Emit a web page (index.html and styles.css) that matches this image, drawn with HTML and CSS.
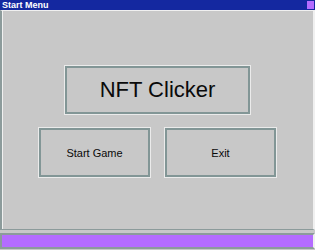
FILE: index.html
```html
<!DOCTYPE html>
<html lang="en">
<head>
    <meta charset="UTF-8">
    <meta name="viewport" content="width=device-width, initial-scale=1.0">
    <title>Start Menu</title>
    <link rel="stylesheet" href="styles.css">
</head>
<body>
    <div class="window">
        <div class="titleBar">
            <span class="titleText">Start Menu</span>
            <span class="titleButton"></span>
        </div>
        <div class="panel">
            <div class="logo">NFT Clicker</div>
            <div class="buttons">
                <button class="menuButton">Start Game</button>
                <button class="menuButton">Exit</button>
            </div>
        </div>
        <div class="statusBar">
            <div class="statusFill"></div>
        </div>
    </div>
</body>
</html>
```

FILE: styles.css
```css
body {
    margin: 0;
    background-color: rgb(200, 200, 200);
    font-family: "Liberation Sans", Arial, sans-serif;
}
.window {
    width: 315px;
    height: 250px;
    display: flex;
    flex-direction: column;
    background-color: rgb(200, 200, 200);
}
.titleBar {
    height: 10px;
    background-color: rgb(20, 40, 160);
    display: flex;
    align-items: center;
    justify-content: space-between;
    padding: 0 1px 0 2px;
}
.titleText {
    color: white;
    font-size: 9px;
    font-weight: bold;
    line-height: 9px;
}
.titleButton {
    width: 7px;
    height: 8px;
    background-color: rgb(180, 108, 255);
}
.panel {
    flex: 1;
    border-left: 2px solid rgb(140, 155, 155);
    border-top: 1px solid rgb(240, 240, 240);
    border-right: 2px solid rgb(240, 240, 240);
    border-bottom: 1px solid rgb(140, 155, 155);
    box-shadow: inset 1px 0 0 rgb(240, 240, 240);
    display: flex;
    flex-direction: column;
    align-items: center;
    padding-top: 54px;
}
.logo {
    width: 185px;
    height: 48px;
    border: 1px solid rgb(235, 235, 235);
    box-shadow: inset 0 0 0 2px rgb(130, 150, 150);
    display: flex;
    align-items: center;
    justify-content: center;
    font-size: 22px;
    color: rgb(10, 10, 10);
}
.buttons {
    display: flex;
    gap: 13px;
    margin-top: 12px;
}
.menuButton {
    width: 113px;
    height: 51px;
    border: 1px solid rgb(235, 235, 235);
    box-shadow: inset 0 0 0 2px rgb(130, 150, 150);
    background-color: inherit;
    font-family: inherit;
    font-size: 11px;
    color: rgb(10, 10, 10);
    padding: 0;
    cursor: pointer;
}
.statusBar {
    height: 12px;
    margin: 3px 0 1px 0;
    border: 2px solid rgb(140, 155, 155);
    border-right-color: rgb(240, 240, 240);
}
.statusFill {
    height: 100%;
    background-color: rgb(180, 108, 255);
}
```
